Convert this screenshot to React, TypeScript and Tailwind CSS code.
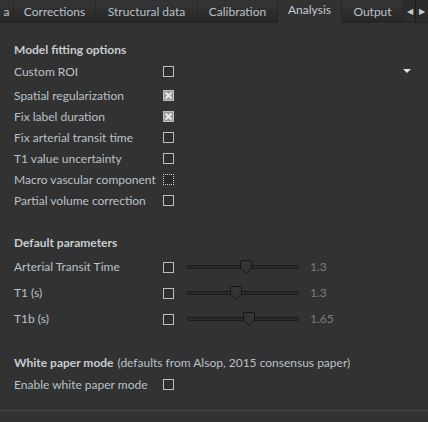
const tabs = [
  { label: "a", w: "w-[14px]" },
  { label: "Corrections", w: "w-[82px]" },
  { label: "Structural data", w: "w-[102px]" },
  { label: "Calibration", w: "w-[80px]" },
  { label: "Analysis", w: "w-[64px]", active: true },
  { label: "Output", w: "w-[62px]" },
];

const Check = ({ state }: { state?: "x" | "dotted" }) => {
  if (state === "dotted")
    return <div className="size-[11px] border border-dotted border-[#d0d0d0] bg-[#2a2a2a]" />;
  return (
    <div className="size-[11px] border border-[#bdbdbd] bg-[#2e2e2e] flex items-center justify-center">
      {state === "x" && (
        <svg width="9" height="9" viewBox="0 0 9 9">
          <rect x="0" y="0" width="9" height="9" fill="#9a9a9a" />
          <path d="M1.5 1.5 L7.5 7.5 M7.5 1.5 L1.5 7.5" stroke="#e6e6e6" strokeWidth="2" />
        </svg>
      )}
    </div>
  );
};

const Row = ({ label, state }: { label: string; state?: "x" | "dotted" }) => (
  <div className="flex items-center h-[21px]">
    <span className="w-[149px]">{label}</span>
    <Check state={state} />
  </div>
);

const Param = ({ label, pos, value }: { label: string; pos: number; value: string }) => (
  <div className="flex items-center h-[26px]">
    <span className="w-[149px]">{label}</span>
    <Check />
    <div className="relative ml-[13px] w-[112px] h-[14px] flex items-center">
      <div className="w-full h-[4px] rounded-full border border-[#1c1c1c] bg-[#2a2a2a]" />
      <svg
        className="absolute top-0"
        style={{ left: pos }}
        width="12"
        height="14"
        viewBox="0 0 12 14"
      >
        <path d="M0.5 1.5 Q0.5 0.5 1.5 0.5 L10.5 0.5 Q11.5 0.5 11.5 1.5 L11.5 8 L6 13.5 L0.5 8 Z" fill="#333" stroke="#161616" />
        <path d="M4 3 L4.5 3.5 M8 3 L7.5 3.5" stroke="#555" />
      </svg>
    </div>
    <span className="ml-[11px] text-[#7c7c7c]">{value}</span>
  </div>
);

export default function App() {
  return (
    <div
      className="w-[428px] h-[422px] bg-[#323232] text-[12px] text-[#bac1c8] overflow-hidden flex flex-col"
      style={{ fontFamily: "Lato, 'Open Sans', sans-serif" }}
    >
      <div className="flex h-[23px] bg-[#323232] border-b border-[#262626]">
        {tabs.map((t) => (
          <div
            key={t.label}
            className={`${t.w} shrink-0 flex items-center justify-center border-r border-[#262626] ${
              t.active ? "bg-[#323232] text-[#c3cbd2] -mb-px pb-[3px]" : "bg-gradient-to-b from-[#353535] to-[#262626] mt-[2px]"
            }`}
          >
            {t.label}
          </div>
        ))}
        <div className="flex-1 flex bg-[#1f1f1f]">
          <div className="w-[12px] flex items-center justify-center text-[#c8c8c8] text-[8px] bg-[#2c2c2c] border-r border-[#1a1a1a]">◀</div>
          <div className="w-[12px] flex items-center justify-center text-[#c8c8c8] text-[8px] bg-[#2c2c2c]">▶</div>
        </div>
      </div>

      <div className="flex-1 flex flex-col px-[14px] pt-[16px]">
        <div className="font-bold text-[#c8ccd0] h-[22px] flex items-center">Model fitting options</div>
        <div className="relative">
          <Row label="Custom ROI" />
          <div className="absolute right-[3px] top-[8px] w-0 h-0 border-l-[4px] border-r-[4px] border-t-[4px] border-l-transparent border-r-transparent border-t-[#e0e0e0]" />
        </div>
        <div className="h-[3px]" />
        <Row label="Spatial regularization" state="x" />
        <Row label="Fix label duration" state="x" />
        <Row label="Fix arterial transit time" />
        <Row label="T1 value uncertainty" />
        <Row label="Macro vascular component" state="dotted" />
        <Row label="Partial volume correction" />

        <div className="h-[21px]" />
        <div className="font-bold text-[#c8ccd0] h-[22px] flex items-center">Default parameters</div>
        <Param label="Arterial Transit Time" pos={53} value="1.3" />
        <Param label="T1 (s)" pos={43} value="1.3" />
        <Param label="T1b (s)" pos={56} value="1.65" />

        <div className="h-[20px]" />
        <div className="h-[22px] flex items-center">
          <span className="font-bold text-[#c8ccd0]">White paper mode</span>
          <span className="ml-1">(defaults from Alsop, 2015 consensus paper)</span>
        </div>
        <Row label="Enable white paper mode" />
      </div>
      <div className="h-[12px] border-t border-[#454545] mt-auto" />
    </div>
  );
}
